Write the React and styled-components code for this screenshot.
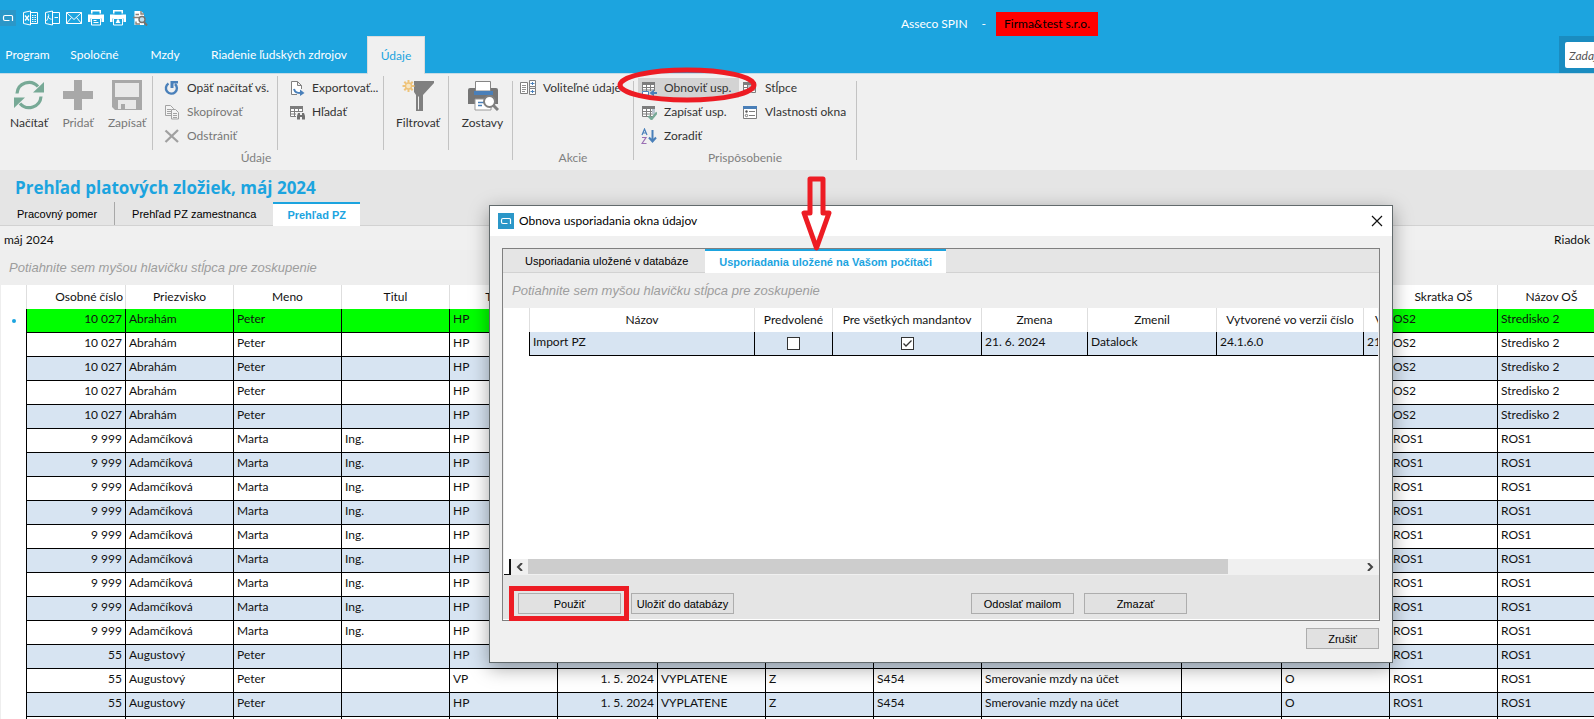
import React, { useState } from "react";
import styled, { createGlobalStyle, css } from "styled-components";

const BLUE = "#1ca4df";
const UI = "Lato, 'Open Sans', sans-serif";
const CLASSIC = "'Liberation Sans', Arial, sans-serif";

const GlobalStyle = createGlobalStyle`
  * { box-sizing: border-box; }
  body { margin: 0; background: #fff; color: #111; font: 12px/16px ${UI}; }
  button, input { font: inherit; color: inherit; }
  button { cursor: pointer; }
`;

const Screen = styled.div`
  position: relative;
  display: flex;
  flex-direction: column;
  height: 100vh;
  overflow: hidden;
`;

/* ---------- blue header ---------- */
const Header = styled.header`
  background: ${BLUE};
  color: #fff;
  border-bottom: 1px solid #c5dbe6;
`;
const TitleBar = styled.div`
  display: grid;
  grid-template-columns: 13fr 10fr;
  align-items: end;
  height: 36px;
`;
const QuickBar = styled.div`
  display: flex;
  gap: 6px;
  height: 26px;
`;
const QuickButton = styled.button`
  display: flex;
  padding: 0;
  width: 16px;
  height: 16px;
  border: 0;
  background: ${(p) => (p.$logo ? "#2b97c8" : "none")};
`;
const AppTitle = styled.div`
  display: flex;
  align-items: center;
  gap: 14px;
`;
const Company = styled.span`
  padding: 4px 8px;
  margin-left: -4px;
  background: #f00;
  color: #000;
`;
const MenuRow = styled.div`
  display: flex;
  justify-content: space-between;
  height: 37px;
`;
const Menu = styled.nav`
  display: flex;
`;
const MenuTab = styled.button`
  width: ${(p) => p.$width}px;
  padding: 0;
  border: 0;
  background: none;
  white-space: nowrap;
  ${(p) =>
    p.$active &&
    css`
      margin: 0 0 -1px 5px;
      border: 1px solid #dcdcdc;
      border-bottom: 0;
      background: #f0f0f0;
      color: ${BLUE};
    `}
`;
const SearchPanel = styled.div`
  width: 35px;
  padding: 6px 0 5px 6px;
  background: #1a8cc0;
  overflow: hidden;
`;
const SearchInput = styled.input`
  display: block;
  width: 180px;
  height: 26px;
  padding: 0 4px;
  border: 0;
  border-radius: 2px;
  background: #fff;
  color: #555;
  font-style: italic;
  &::placeholder { color: #555; opacity: 1; }
`;

/* ---------- ribbon ---------- */
const Ribbon = styled.div`
  display: flex;
  height: 96px;
  padding-top: 2px;
  background: #f0f0f0;
  color: #333;
`;
const Group = styled.section`
  display: flex;
  flex-direction: column;
  width: ${(p) => p.$width}px;
`;
const GroupBody = styled.div`
  display: flex;
  height: 74px;
`;
const GroupLabel = styled.div`
  text-align: center;
  color: #808080;
`;
const Divider = styled.div`
  flex: none;
  width: 1px;
  background: #c3c3c3;
  ${(p) => p.$group && css`margin: 5px 0 10px;`}
`;
const BigTools = styled.div`
  display: flex;
  justify-content: center;
  width: ${(p) => p.$width}px;
  padding-left: 4px;
`;
const BigButton = styled.button`
  display: flex;
  flex-direction: column;
  align-items: center;
  gap: 4px;
  width: 49px;
  padding: 3px 0 0;
  border: 0;
  background: none;
  white-space: nowrap;
  &:disabled { color: #777; }
`;
const SmallTools = styled.div`
  position: relative;
  display: grid;
  grid-auto-rows: 24px;
  align-items: center;
  align-content: start;
  width: ${(p) => p.$width}px;
  padding-left: ${(p) => p.$pad}px;
`;
const SmallButton = styled.button`
  display: flex;
  align-items: center;
  gap: 7px;
  height: 20px;
  padding: 0 0 0 3px;
  border: 0;
  background: ${(p) => (p.$hot ? "#d3d3d3" : "none")};
  white-space: nowrap;
  &:disabled { color: #777; }
  svg { flex: none; }
`;

/* ---------- page ---------- */
const PageHead = styled.div`
  background: #e5e5e5;
  border-bottom: 1px solid #d2d2d2;
`;
const PageTitle = styled.h1`
  margin: 0;
  padding: 6px 15px 2px;
  color: ${BLUE};
  font: bold 17px/24px "Open Sans", sans-serif;
`;
const Tabs = styled.div`
  display: flex;
  height: 23px;
  padding-left: ${(p) => p.$pad || 0}px;
  background: #e5e5e5;
  ${(p) => p.$lined && css`
    height: 24px;
    border-bottom: 1px solid #d2d2d2;
  `}
`;
const Tab = styled.button`
  padding: 0 17px;
  border: 0;
  border-right: ${(p) => (p.$line ? "1px solid #a8a8a8" : 0)};
  background: none;
  font: 11px/16px ${CLASSIC};
  color: #000;
  white-space: nowrap;
  ${(p) => p.$active && css`
    margin-bottom: -1px;
    padding: 0 14px;
    border-top: 2px solid ${BLUE};
    background: #fff;
    color: ${BLUE};
    font-weight: bold;
  `}
`;
const InfoRow = styled.div`
  display: flex;
  justify-content: space-between;
  padding: 6px 4px 2px;
  background: #f0f0f0;
`;
const DropZone = styled.div`
  padding: 10px 9px 9px;
  background: #eee;
  color: #9d9d9d;
  font: italic 13px/16px ${CLASSIC};
`;

/* ---------- grids ---------- */
const GridFrame = styled.div`
  flex: 1;
  min-height: 0;
  border-left: 1px solid #eee;
  background: #fff;
  overflow: hidden;
`;
const Grid = styled.table`
  table-layout: fixed;
  width: ${(p) => p.$width}px;
  border-collapse: separate;
  border-spacing: 0;
`;
const Col = styled.col`
  width: ${(p) => p.$width}px;
`;
const Th = styled.th`
  height: 24px;
  padding: 0 2px;
  border-right: 1px solid #dedede;
  font-weight: normal;
  text-align: ${(p) => (p.$right ? "right" : "center")};
  white-space: nowrap;
`;
const Tr = styled.tr`
  background: ${(p) => ({ green: "#00ff00", blue: "#d7e4f2", white: "#fff" })[p.$tone]};
`;
const Td = styled.td`
  height: 24px;
  padding: 0 3px;
  border-right: 1px solid #000;
  border-bottom: 1px solid #000;
  line-height: 20px;
  vertical-align: top;
  white-space: nowrap;
  text-align: ${(p) => p.$align || "left"};
`;
const Gutter = styled.td`
  padding: 0;
  border-right: 1px solid #000;
  background: #fff;
`;
const RowDot = styled.div`
  width: 4px;
  height: 4px;
  margin: 0 auto;
  border-radius: 2px;
  background: ${BLUE};
`;
const Check = styled.input`
  appearance: none;
  display: block;
  width: 13px;
  height: 13px;
  margin: 5px auto 0;
  border: 1px solid #333;
  background: #fff;
  &:checked {
    background: #fff url("data:image/svg+xml,%3Csvg xmlns='http://www.w3.org/2000/svg' viewBox='0 0 11 11'%3E%3Cpath d='M1.500 5.500l2.500 2.500L9.500 2.500' fill='none' stroke='%23333' stroke-width='1.300'/%3E%3C/svg%3E");
  }
`;

/* ---------- dialog ---------- */
const Dialog = styled.section`
  position: absolute;
  left: 489px;
  top: 205px;
  width: 904px;
  border: 1px solid #626a6c;
  background: #f0f0f0;
  box-shadow: 0 5px 18px rgba(0, 0, 0, 0.36);
`;
const DialogBar = styled.div`
  display: flex;
  align-items: center;
  gap: 5px;
  height: 30px;
  padding: 0 9px 0 8px;
  background: #fff;
  color: #000;
`;
const CloseButton = styled.button`
  display: flex;
  margin-left: auto;
  padding: 0;
  border: 0;
  background: none;
`;
const DialogBody = styled.div`
  padding: 12px;
`;
const Panel = styled.div`
  border: 1px solid #808080;
  background: #f0f0f0;
`;
const GridArea = styled.div`
  height: 251px;
  margin: 0 1px;
  background: #fff;
  overflow: hidden;
`;
const ScrollRow = styled.div`
  display: flex;
  height: 16px;
  padding: 0 1px;
  background: #f0f0f0;
`;
const Corner = styled.div`
  width: 7px;
  background: #fff;
  border-right: 2px solid #111;
  border-bottom: 1px solid #111;
`;
const ScrollButton = styled.button`
  display: flex;
  align-items: center;
  justify-content: center;
  width: 17px;
  padding: 0;
  border: 0;
  background: #f0f0f0;
`;
const Track = styled.div`
  flex: 1;
`;
const Thumb = styled.div`
  width: 84%;
  height: 15px;
  background: #cdcdcd;
`;
const Actions = styled.div`
  display: flex;
  gap: 10px;
  padding: 18px 192px 5px 15px;
  border-bottom: 1px solid #fff;
  background: #e5e5e5;
`;
const Button = styled.button`
  width: ${(p) => (p.$narrow ? 73 : 103)}px;
  height: 21px;
  padding: 0;
  border: 1px solid #adadad;
  background: #e1e1e1;
  font: 11px/16px ${CLASSIC};
  color: #000;
  white-space: nowrap;
`;
const Push = styled.div`
  flex: 1;
`;
const DialogFooter = styled.div`
  display: flex;
  justify-content: flex-end;
  padding: 7px 1px 1px;
`;

/* ---------- red marks drawn over the windows ---------- */
const Marked = styled.div`
  position: relative;
  display: flex;
  &::after {
    content: "";
    position: absolute;
    inset: -7px -8px -7px -9px;
    border: 5px solid #ed1c24;
    pointer-events: none;
  }
`;
const Ring = styled.svg`
  position: absolute;
  z-index: 1;
  left: -18px;
  top: -10px;
  pointer-events: none;
`;
const Arrow = styled.svg`
  position: absolute;
  left: 311px;
  top: -32px;
  pointer-events: none;
`;

/* ---------- icons ---------- */
const Svg = ({ size = 16, children }) => (
  <svg width={size} height={size} viewBox={`0 0 ${size} ${size}`} fill="none" aria-hidden="true">{children}</svg>
);

const LogoShape = () => (
  <path d="M9.500 10.500H5Q3.500 10.500 3.500 9V7Q3.500 5.500 5 5.500H11.500Q12.500 5.500 12.500 6.500V11" stroke="#fff" strokeWidth="1.200" />
);

const quick = [
  ["Asseco", <Svg key="l"><LogoShape /></Svg>],
  ["Excel", (
    <Svg key="x">
      <path d="M9 2.500h6.500v11H9M1.500 2.500L8.500 1v14l-7-1.500z" stroke="#fff" />
      <path d="M3 5.500l4 5M7 5.500l-4 5" stroke="#fff" strokeWidth="1.300" />
      <path d="M10 5.500h1.500M10 7.500h1.500M10 9.500h1.500M10 11.500h1.500M12.500 5.500H14M12.500 7.500H14M12.500 9.500H14M12.500 11.500H14" stroke="#fff" />
    </Svg>
  )],
  ["PDF", (
    <Svg key="p">
      <path d="M9 2.500h6.500v11H9M1.500 2.500L8.500 1v14l-7-1.500z" stroke="#fff" />
      <path d="M4 4.500c1.500 0 .5 3-1.500 6.500M4 6c.5 2 1.500 3 3.500 3.200M10.500 7.500h3.500" stroke="#fff" />
    </Svg>
  )],
  ["E-mail", (
    <Svg key="m"><path d="M.5 2.500h15v11H.5zM.5 2.500L8 9.500l7.500-7M.5 13.500l5-6M15.500 13.500l-5-6" stroke="#fff" /></Svg>
  )],
  ["Tlač", (
    <Svg key="t">
      <path d="M3 0h10v3.500H3zM0 4.500h16V12h-2.500V8.500h-11V12H0z" fill="#fff" />
      <path d="M4.500 1.500h7v3h-7z" fill={BLUE} />
      <path d="M3.500 8.500h9v6.500h-9zM5.500 10.500h3M5.500 12.500h5" stroke="#fff" />
    </Svg>
  )],
  ["Rýchla tlač", (
    <Svg key="r">
      <path d="M3 0h10v3.500H3zM0 4.500h16V12h-2.500V8.500h-11V12H0z" fill="#fff" />
      <path d="M4.500 1.500h7v3h-7z" fill={BLUE} />
      <path d="M3.500 8.500h9v6.500h-9z" stroke="#fff" />
      <path d="M7 9.500h2l.5 2 1 1.500h-5l1-1.500z" fill="#fff" />
    </Svg>
  )],
  ["Náhľad", (
    <Svg key="n">
      <path d="M2.500 1H9l3 3v11H2.500z" fill="#fff" />
      <path d="M9 1v3h3M3.500 4.500H7M1 7.500h7M4 11.500v2.500h4" stroke="#8a8178" strokeWidth="1.400" />
      <circle cx="10" cy="9.500" r="3" fill="#bfe0ee" stroke="#77716c" strokeWidth="1.400" />
      <path d="M12 12l3 3.500" stroke="#77716c" strokeWidth="2" />
    </Svg>
  )],
];

const ReloadIcon = () => (
  <Svg size={32}>
    <path d="M4 14.500A12 12 0 0 1 25 7.500M28 17.500A12 12 0 0 1 7 24.500" stroke="#77a996" strokeWidth="3.200" />
    <path d="M31 3v10.500H20zM1 29V18.500h11z" fill="#77a996" />
  </Svg>
);
const PlusIcon = () => (
  <Svg size={32}><path d="M12 1h8v11h11v8H20v11h-8V20H1v-8h11z" fill="#a8a8a8" /></Svg>
);
const SaveIcon = () => (
  <Svg size={32}>
    <path d="M1 1h30v30H4l-3-3z" fill="#a8a8a8" />
    <path d="M4 4h24v14H4zM7 21h18v9H14v-5h-4v5H7z" fill="#e8e8e8" />
  </Svg>
);
const FunnelIcon = () => (
  <Svg size={32}>
    <path d="M12 2h20v2l-11 12v16h-7V16l-2-3z" fill="#808080" />
    <path d="M16.500 17.500v13" stroke="#f0f0f0" />
    <path d="M6.500 1v12M.5 7h12M2.300 2.800l8.400 8.400M10.700 2.800l-8.400 8.400" stroke="#eec37a" strokeWidth="2" />
    <circle cx="6.500" cy="7" r="3" fill="#f6e6c4" stroke="#eec37a" strokeWidth="1.300" />
  </Svg>
);
const PrintPreviewIcon = () => (
  <Svg size={32}>
    <path d="M1 11q0-2 2-2h26q2 0 2 2v14H1z" fill="#757575" />
    <path d="M8.500 2.500h15V12h-15z" fill="#fff" stroke="#858585" />
    <path d="M7 12h19v4H7z" fill="#4a7fb8" />
    <path d="M8 20h16v11H8z" fill="#fff" stroke="#999" />
    <path d="M11 23.500h6M11 26.500h4" stroke="#4a7fb8" strokeWidth="1.300" />
    <circle cx="22.500" cy="22.500" r="5.500" fill="#fff" stroke="#808080" strokeWidth="2" />
    <path d="M26.500 26.500l4.500 4.500" stroke="#808080" strokeWidth="3" />
  </Svg>
);

const UndoIcon = () => (
  <Svg>
    <path d="M4.500 3.500a5.500 5.500 0 1 0 6.500 .5" stroke="#4a80ba" strokeWidth="2.400" />
    <path d="M6.500 1H14v2.500H9.500V8h-3z" fill="#4a80ba" />
  </Svg>
);
const CopyIcon = () => (
  <Svg>
    <path d="M1.500 1.500h5l3 3v7h-8z" fill="#f4f4f4" stroke="#a3a3a3" />
    <path d="M3 5.500h4M3 7.500h4M3 9.500h4" stroke="#a3a3a3" />
    <path d="M7.500 5.500h4l3 3v6.500h-7z" fill="#f4f4f4" stroke="#a3a3a3" />
    <path d="M9 9.500h4M9 11.500h4M9 13.500h4" stroke="#a3a3a3" />
  </Svg>
);
const DeleteIcon = () => (
  <Svg><path d="M1.500 2.500L14 14M14 2L1.500 14" stroke="#a0a0a0" strokeWidth="2.300" /></Svg>
);
const ExportIcon = () => (
  <Svg>
    <path d="M8 14.500H2.500V1.500h6l4 4V9M8.500 1.500v4h4" fill="#fff" stroke="#808080" />
    <path d="M5 9c1 3.500 3 4 7 4" stroke="#4a80ba" strokeWidth="2" />
    <path d="M11 9.500l4.500 3.500-4.500 3z" fill="#4a80ba" />
  </Svg>
);
const Sheet = ({ children }) => (
  <Svg>
    <path d="M1.500 2.500h12v10h-12z" fill="#fff" />
    <path d="M1 2h13v3H1z" fill="#7d7d7d" />
    <path d="M1.500 2.500h12v10h-12zM5.500 4v8M9.500 4v8M2 7.500h11M2 10h11" stroke="#7d7d7d" />
    {children}
  </Svg>
);
const FindIcon = () => (
  <Sheet>
    <path d="M7 8h9v8H7z" fill="#f0f0f0" />
    <path d="M9 9h2v2h2V9h2l1 3v3.500h-3V13h-2v2.500H8V12z" fill="#707070" />
  </Sheet>
);
const RestoreIcon = () => (
  <Sheet>
    <path d="M1 11h15v5H1z" fill="#d3d3d3" />
    <path d="M1.500 11.500h6V15h-6z" fill="#fff" stroke="#4a80ba" />
    <path d="M16 13h-4" stroke="#4a80ba" strokeWidth="2" />
    <path d="M13 9.500v7L8.500 13z" fill="#4a80ba" />
  </Sheet>
);
const StoreIcon = () => (
  <Sheet>
    <path d="M11 5h3v5h-3z" fill="#bcc6d0" />
    <path d="M7.500 12l3 3L16 8.500" stroke="#77a996" strokeWidth="2.400" />
  </Sheet>
);
const ColumnsIcon = () => (
  <Sheet><path d="M6 5h3.500v8H6z" fill="#b9c3cd" /></Sheet>
);
const SortIcon = () => (
  <Svg>
    <path d="M1 7L3.500 1 6 7M2 5h3" stroke="#4a80ba" strokeWidth="1.200" />
    <path d="M1 9.500h4l-4 6h4.500" stroke="#9b70b4" strokeWidth="1.200" />
    <path d="M11.500 2v11M8 9.500l3.500 4 3.500-4" stroke="#4a80ba" strokeWidth="2" />
  </Svg>
);
const PropsIcon = () => (
  <Svg>
    <path d="M1.500 2.500h13v12h-13z" fill="#fff" stroke="#7d7d7d" />
    <path d="M1 2h14v3H1z" fill="#4a7fb8" />
    <path d="M7 7.500h6M7 11.500h6" stroke="#7d7d7d" />
    <circle cx="4.500" cy="7.500" r="1.200" fill="#555" />
    <circle cx="4.500" cy="11.500" r="1.200" stroke="#555" strokeWidth=".8" />
  </Svg>
);
const FieldsIcon = () => (
  <Svg>
    <path d="M.5 2.500h7v11h-7zM9.500.5h6v6h-6zM9.500 8.500h6v6h-6z" fill="#fff" stroke="#808080" />
    <path d="M9.500 6.500v2M15.500 6.500v2" stroke="#808080" />
    <path d="M2 5.500h4M2 7.500h4M2 9.500h4M2 11.500h3" stroke="#909090" />
    <path d="M10.500 3.500h4M12.500 2v3M10.500 11.500h4M12.500 10v3" stroke="#4a80ba" />
  </Svg>
);

/* ---------- data ---------- */
const columns = [
  ["", 26], ["Osobné číslo", 99], ["Priezvisko", 108], ["Meno", 108], ["Titul", 108], ["Typ PZ", 108],
  ["", 100], ["", 108], ["", 108], ["", 108], ["", 200], ["", 100], ["", 108], ["Skratka OŠ", 108], ["Názov OŠ", 108],
];

const transfer = ["1. 5. 2024", "VYPLATENE", "Z", "S454", "Smerovanie mzdy na účet", "", "O"];
const blank = ["", "", "", "", "", "", ""];
const person = (id, last, first, title, type, middle, code, name) => [id, last, first, title, type, ...middle, code, name];

const rows = [
  ...Array.from({ length: 5 }, () => person("10 027", "Abrahám", "Peter", "", "HP", blank, "OS2", "Stredisko 2")),
  ...Array.from({ length: 9 }, () => person("9 999", "Adamčíková", "Marta", "Ing.", "HP", blank, "ROS1", "ROS1")),
  person("55", "Augustový", "Peter", "", "HP", blank, "ROS1", "ROS1"),
  person("55", "Augustový", "Peter", "", "VP", transfer, "ROS1", "ROS1"),
  person("55", "Augustový", "Peter", "", "HP", transfer, "ROS1", "ROS1"),
  person("", "", "", "", "", blank, "", ""),
];

const layoutColumns = [
  ["", 26], ["Názov", 225], ["Predvolené", 78], ["Pre všetkých mandantov", 149], ["Zmena", 106],
  ["Zmenil", 129], ["Vytvorené vo verzii číslo", 147], ["Vytvorené dňa", 100],
];

const menu = [["Program", 55], ["Spoločné", 79], ["Mzdy", 62], ["Riadenie ľudských zdrojov", 166], ["Údaje", 58]];

const total = (cols) => cols.reduce((sum, c) => sum + c[1], 0);

function AppHeader() {
  return (
    <Header>
      <TitleBar>
        <QuickBar>
          {quick.map(([label, icon], i) => (
            <QuickButton key={label} aria-label={label} $logo={i === 0}>{icon}</QuickButton>
          ))}
        </QuickBar>
        <AppTitle>
          <span>Asseco SPIN</span>
          <span>-</span>
          <Company>Firma&amp;test s.r.o.</Company>
        </AppTitle>
      </TitleBar>
      <MenuRow>
        <Menu>
          {menu.map(([label, width]) => (
            <MenuTab key={label} $width={width} $active={label === "Údaje"}>{label}</MenuTab>
          ))}
        </Menu>
        <SearchPanel>
          <SearchInput aria-label="Hľadať v programe" placeholder="Zadajte text" />
        </SearchPanel>
      </MenuRow>
    </Header>
  );
}

function RibbonBar() {
  return (
    <Ribbon>
      <Group $width={512}>
        <GroupBody>
          <BigTools $width={152}>
            <BigButton><ReloadIcon />Načítať</BigButton>
            <BigButton disabled><PlusIcon />Pridať</BigButton>
            <BigButton disabled><SaveIcon />Zapísať</BigButton>
          </BigTools>
          <Divider />
          <SmallTools $width={124} $pad={8}>
            <SmallButton><UndoIcon />Opäť načítať vš.</SmallButton>
            <SmallButton disabled><CopyIcon />Skopírovať</SmallButton>
            <SmallButton disabled><DeleteIcon />Odstrániť</SmallButton>
          </SmallTools>
          <Divider />
          <SmallTools $width={105} $pad={8}>
            <SmallButton><ExportIcon />Exportovať...</SmallButton>
            <SmallButton><FindIcon />Hľadať</SmallButton>
          </SmallTools>
          <Divider />
          <BigTools $width={64}><BigButton><FunnelIcon />Filtrovať</BigButton></BigTools>
          <Divider />
          <BigTools $width={63}><BigButton><PrintPreviewIcon />Zostavy</BigButton></BigTools>
        </GroupBody>
        <GroupLabel>Údaje</GroupLabel>
      </Group>
      <Divider $group />
      <Group $width={120}>
        <GroupBody>
          <SmallTools $width={120} $pad={4}>
            <SmallButton><FieldsIcon />Voliteľné údaje</SmallButton>
          </SmallTools>
        </GroupBody>
        <GroupLabel>Akcie</GroupLabel>
      </Group>
      <Divider $group />
      <Group $width={222}>
        <GroupBody>
          <SmallTools $width={105} $pad={4}>
            <SmallButton $hot><RestoreIcon />Obnoviť usp.</SmallButton>
            <SmallButton><StoreIcon />Zapísať usp.</SmallButton>
            <SmallButton><SortIcon />Zoradiť</SmallButton>
            <Ring width="142" height="38" viewBox="0 0 142 38">
              <ellipse cx="71" cy="19" rx="67" ry="15" fill="none" stroke="#ed1c24" strokeWidth="5" />
            </Ring>
          </SmallTools>
          <SmallTools $width={117} $pad={0}>
            <SmallButton><ColumnsIcon />Stĺpce</SmallButton>
            <SmallButton><PropsIcon />Vlastnosti okna</SmallButton>
          </SmallTools>
        </GroupBody>
        <GroupLabel>Prispôsobenie</GroupLabel>
      </Group>
      <Divider $group />
    </Ribbon>
  );
}

function PayrollGrid() {
  const align = (i) => (i === 0 || i === 5 ? "right" : "left");
  const tone = (i) => (i === 0 ? "green" : i % 2 ? "white" : "blue");
  return (
    <GridFrame>
      <Grid $width={total(columns)}>
        <colgroup>{columns.map(([, width], i) => <Col key={i} $width={width} />)}</colgroup>
        <thead>
          <tr>{columns.map(([label], i) => <Th key={i} $right={i === 1}>{label}</Th>)}</tr>
        </thead>
        <tbody>
          {rows.map((row, r) => (
            <Tr key={r} $tone={tone(r)}>
              <Gutter>{r === 0 && <RowDot />}</Gutter>
              {row.map((value, c) => <Td key={c} $align={align(c)}>{value}</Td>)}
            </Tr>
          ))}
        </tbody>
      </Grid>
    </GridFrame>
  );
}

function RestoreDialog() {
  const [isDefault, setDefault] = useState(false);
  const [forAll, setForAll] = useState(true);
  return (
    <Dialog role="dialog" aria-labelledby="dialog-title">
      <DialogBar>
        <Svg>
          <path d="M0 0h16v16H0z" fill="#2b97c8" />
          <LogoShape />
        </Svg>
        <span id="dialog-title">Obnova usporiadania okna údajov</span>
        <CloseButton aria-label="Zavrieť">
          <Svg size={12}><path d="M1 1l10 10M11 1L1 11" stroke="#111" strokeWidth="1.200" /></Svg>
        </CloseButton>
      </DialogBar>
      <DialogBody>
        <Panel>
          <Tabs $pad={5} $lined>
            <Tab>Usporiadania uložené v databáze</Tab>
            <Tab $active>Usporiadania uložené na Vašom počítači</Tab>
          </Tabs>
          <DropZone>Potiahnite sem myšou hlavičku stĺpca pre zoskupenie</DropZone>
          <GridArea>
            <Grid $width={total(layoutColumns)}>
              <colgroup>{layoutColumns.map(([, width], i) => <Col key={i} $width={width} />)}</colgroup>
              <thead>
                <tr>{layoutColumns.map(([label], i) => <Th key={i}>{label}</Th>)}</tr>
              </thead>
              <tbody>
                <Tr $tone="blue">
                  <Gutter />
                  <Td>Import PZ</Td>
                  <Td>
                    <Check type="checkbox" aria-label="Predvolené" checked={isDefault} onChange={() => setDefault(!isDefault)} />
                  </Td>
                  <Td>
                    <Check type="checkbox" aria-label="Pre všetkých mandantov" checked={forAll} onChange={() => setForAll(!forAll)} />
                  </Td>
                  <Td>21. 6. 2024</Td>
                  <Td>Datalock</Td>
                  <Td>24.1.6.0</Td>
                  <Td>21. 6. 2024</Td>
                </Tr>
              </tbody>
            </Grid>
          </GridArea>
          <ScrollRow>
            <Corner />
            <ScrollButton aria-label="Doľava">
              <Svg size={8}><path d="M6 0L2 4l4 4" stroke="#444" strokeWidth="2" /></Svg>
            </ScrollButton>
            <Track><Thumb /></Track>
            <ScrollButton aria-label="Doprava">
              <Svg size={8}><path d="M2 0l4 4-4 4" stroke="#444" strokeWidth="2" /></Svg>
            </ScrollButton>
          </ScrollRow>
          <Actions>
            <Marked><Button>Použiť</Button></Marked>
            <Button>Uložiť do databázy</Button>
            <Push />
            <Button>Odoslať mailom</Button>
            <Button>Zmazať</Button>
          </Actions>
        </Panel>
        <DialogFooter><Button $narrow>Zrušiť</Button></DialogFooter>
      </DialogBody>
      <Arrow width="31" height="80" viewBox="0 0 31 80">
        <path d="M9 5h13v34h6L15.500 74 3 39h6z" fill="none" stroke="#ed1c24" strokeWidth="5" strokeLinejoin="round" />
      </Arrow>
    </Dialog>
  );
}

export default function App() {
  return (
    <Screen>
      <GlobalStyle />
      <AppHeader />
      <RibbonBar />
      <PageHead>
        <PageTitle>Prehľad platových zložiek, máj 2024</PageTitle>
        <Tabs>
          <Tab $line>Pracovný pomer</Tab>
          <Tab>Prehľad PZ zamestnanca</Tab>
          <Tab $active>Prehľad PZ</Tab>
        </Tabs>
      </PageHead>
      <InfoRow>
        <span>máj 2024</span>
        <span>Riadok</span>
      </InfoRow>
      <DropZone>Potiahnite sem myšou hlavičku stĺpca pre zoskupenie</DropZone>
      <PayrollGrid />
      <RestoreDialog />
    </Screen>
  );
}
